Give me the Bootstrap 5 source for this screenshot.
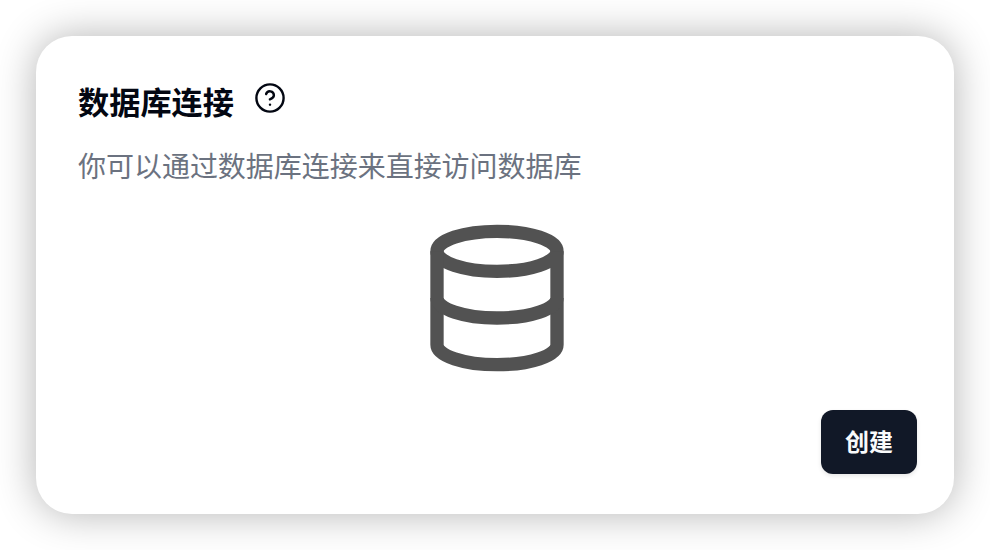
<!DOCTYPE html>
<html lang="zh-CN">
<head>
<meta charset="utf-8">
<meta name="viewport" content="width=device-width, initial-scale=1">
<title>数据库连接</title>
<link href="https://cdn.jsdelivr.net/npm/bootstrap@5.3.0/dist/css/bootstrap.min.css" rel="stylesheet">
<style>
body{font-family:"Liberation Sans","Noto Sans CJK SC",sans-serif;background:#fff;height:550px;overflow:hidden;padding:36px}
.db-panel{width:918px;height:478px;border:0;border-radius:36px;box-shadow:0 0 40px rgba(0,0,0,.3);padding:40px 37px 40px 42px}
.db-title{font-size:31.2px;line-height:48px;font-weight:700;color:#030712;padding-top:4px}
.db-help{margin:6px 0 0 20px;color:#030712}
.db-desc{font-size:28px;line-height:40px;color:#6b7280;margin-top:20px;letter-spacing:-.03px}
.db-art{margin-top:30px;padding-right:2px}
.db-create,.db-create:hover{width:96px;height:64px;border-radius:12px;background:#111827;color:#f9fafb;font-size:24px;font-weight:700;padding:2px 0 0;border:0;box-shadow:0 2px 4px rgba(0,0,0,.1)}
</style>
</head>
<body>
<main class="card db-panel">
<div class="d-flex align-items-start">
<h1 class="db-title mb-0">数据库连接</h1>
<svg class="db-help" width="32" height="32" viewBox="0 0 24 24" fill="none" stroke="currentColor" stroke-width="1.8" stroke-linecap="round" stroke-linejoin="round" role="img" aria-label="帮助"><circle cx="12" cy="12" r="10.2"/><path d="M9.09 9a3 3 0 0 1 5.83 1c0 2-3 3-3 3"/><path d="M12 17h.01"/></svg>
</div>
<p class="db-desc mb-0">你可以通过数据库连接来直接访问数据库</p>
<div class="db-art d-flex justify-content-center">
<svg width="160" height="160" viewBox="0 0 24 24" fill="none" stroke="#525252" stroke-width="2" stroke-linecap="butt" aria-hidden="true"><ellipse cx="12" cy="5" rx="9" ry="3"/><path d="M3 5V19A9 3 0 0 0 21 19V5"/><path d="M3 12A9 3 0 0 0 21 12"/></svg>
</div>
<div class="d-flex justify-content-end mt-auto"><button class="btn db-create" type="button">创建</button></div>
</main>
<script src="https://cdn.jsdelivr.net/npm/bootstrap@5.3.0/dist/js/bootstrap.bundle.min.js"></script>
</body>
</html>
